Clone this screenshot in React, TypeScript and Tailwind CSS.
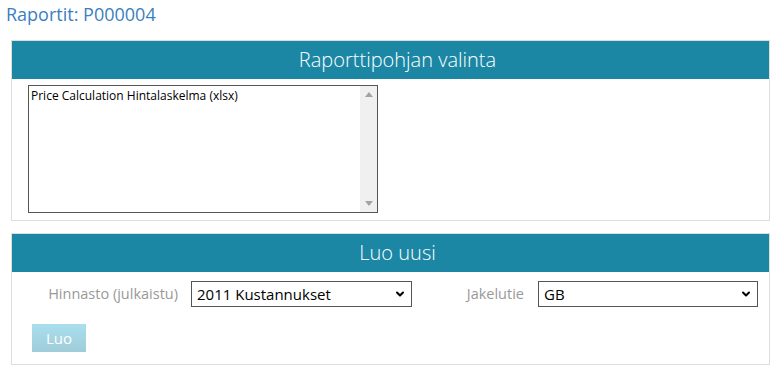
import { ChevronDown } from "lucide-react";

const font = { fontFamily: '"Open Sans", "Noto Sans", sans-serif' };

function Select({ value, width }: { value: string; width: string }) {
  return (
    <div
      className={`relative flex h-[26px] shrink-0 items-center border border-[#555] bg-white pl-[5px] text-[15px] text-black ${width}`}
    >
      <span>{value}</span>
      <ChevronDown className="absolute right-[5px] top-[6px] h-[12px] w-[12px]" strokeWidth={4} />
    </div>
  );
}

export default function App() {
  return (
    <div className="min-h-[371px] bg-white text-[#333]" style={font}>
      <h1 className="px-[6px] pt-[1px] text-[18px] leading-[26px] text-[#3a80bf]">Raportit: P000004</h1>

      <section className="ml-[11px] mr-[4px] mt-[13px] border border-[#ddd]">
        <div className="flex h-[38px] items-center justify-center bg-[#1c87a5] pl-[14px] text-[20px] font-light text-white">
          Raporttipohjan valinta
        </div>
        <div className="px-[16px] pb-[7px] pt-[6px]">
          <div className="flex h-[128px] w-[350px] border border-[#555] bg-white">
            <div className="flex-1 px-[2px] pt-[2px] text-[12px] leading-[16px] text-black">
              Price Calculation Hintalaskelma (xlsx)
            </div>
            <div className="flex w-[17px] flex-col items-center justify-between bg-[#f0f0f0] py-[6px]">
              <svg width="8" height="5" viewBox="0 0 8 5">
                <path d="M0 5 L4 0 L8 5 Z" fill="#a3a3a3" />
              </svg>
              <svg width="8" height="5" viewBox="0 0 8 5">
                <path d="M0 0 L4 5 L8 0 Z" fill="#a3a3a3" />
              </svg>
            </div>
          </div>
        </div>
      </section>

      <section className="ml-[11px] mr-[4px] mt-[12px] border border-[#ddd]">
        <div className="flex h-[38px] items-center justify-center bg-[#1c87a5] pl-[14px] text-[20px] font-light text-white">
          Luo uusi
        </div>
        <div className="pb-[12px] pl-[20px] pr-[10px] pt-[9px]">
          <div className="flex items-center">
            <label className="w-[146px] shrink-0 text-right text-[14.5px] text-[#999]">Hinnasto (julkaistu)</label>
            <div className="ml-[13px] shrink-0">
              <Select value="2011 Kustannukset" width="w-[221px]" />
            </div>
            <label className="w-[112px] shrink-0 text-right text-[14.5px] text-[#999]">Jakelutie</label>
            <div className="ml-[14px] shrink-0">
              <Select value="GB" width="w-[220px]" />
            </div>
          </div>
          <button className="mt-[17px] h-[28px] w-[54px] bg-gradient-to-b from-[#a8dfee] to-[#a0ccd9] text-[15px] text-white">
            Luo
          </button>
        </div>
      </section>
    </div>
  );
}
